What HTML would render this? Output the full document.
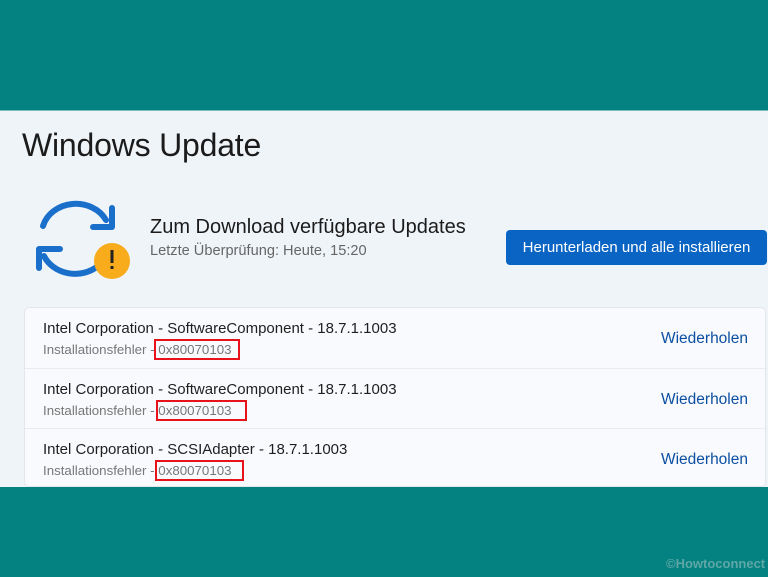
<!DOCTYPE html>
<html><head><meta charset="utf-8"><style>
*{margin:0;padding:0;box-sizing:border-box}
body{width:768px;height:577px;background:#038281;position:relative;overflow:hidden;font-family:"Liberation Sans",sans-serif;white-space:nowrap}
.panel{position:absolute;left:0;top:110px;width:768px;height:377px;background:#eff4f9;border-top:1px solid #7fb8b8}
.t{position:absolute}
h1{position:absolute;left:22px;top:127px;font-size:32px;font-weight:normal;color:#1b1b1b;letter-spacing:-0.2px}
.btn{position:absolute;left:506px;top:230px;width:261px;height:35px;background:#0a64c4;border-radius:4px;color:#fff;font-size:15px;line-height:35px;text-align:center}
.card{position:absolute;left:24px;top:307px;width:742px;height:180px;background:#f8fafd;border:1px solid #e3e7ec;border-radius:5px}
.row{position:absolute;left:0;width:742px;height:60px;border-top:1px solid #e8ebef}
.row .a{position:absolute;left:18px;top:12px;font-size:15px;color:#1f1f1f}
.row .b{position:absolute;left:18px;top:34px;font-size:13.3px;color:#777}
.row .c{position:absolute;right:19px;top:22px;font-size:15.5px;color:#0c4fa2}
.box{position:absolute;top:31px;height:21px;border:2px solid #e8121b}
</style></head><body>
<div class="panel"></div>
<h1>Windows Update</h1>
<svg class="t" style="left:0;top:0" width="768" height="300">
<g fill="none" stroke="#1a6fcb" stroke-width="6" stroke-linecap="round" stroke-linejoin="round">
<path d="M43 226 A34 30 0 0 1 106 220"/>
<path d="M112 208 L112 227 L93 227"/>
<path d="M39 268 L39 249 L60 249"/>
<path d="M44 256 A34 30 0 0 0 98 266"/>
</g>
<circle cx="112" cy="261" r="18" fill="#f8ab1b"/>
<rect x="110.5" y="250" width="3" height="13" fill="#222"/>
<rect x="110.5" y="266" width="3" height="3" fill="#222"/>
</svg>
<div class="t" style="left:150px;top:216px;font-size:20px;color:#1b1b1b">Zum Download verfügbare Updates</div>
<div class="t" style="left:150px;top:243px;font-size:14.6px;color:#666">Letzte Überprüfung: Heute, 15:20</div>
<div class="btn">Herunterladen und alle installieren</div>
<div class="card">
<div class="row" style="top:0;border-top:none"><div class="a">Intel Corporation - SoftwareComponent - 18.7.1.1003</div><div class="b">Installationsfehler - 0x80070103</div><div class="c">Wiederholen</div><div class="box" style="left:129px;width:86px"></div></div>
<div class="row" style="top:60px"><div class="a">Intel Corporation - SoftwareComponent - 18.7.1.1003</div><div class="b">Installationsfehler - 0x80070103</div><div class="c">Wiederholen</div><div class="box" style="left:131px;width:91px"></div></div>
<div class="row" style="top:120px"><div class="a">Intel Corporation - SCSIAdapter - 18.7.1.1003</div><div class="b">Installationsfehler - 0x80070103</div><div class="c">Wiederholen</div><div class="box" style="left:130px;width:89px"></div></div>
</div>
<div class="t" style="left:666px;top:556px;font-size:13px;color:#5fa7a6;font-weight:bold">©Howtoconnect</div>
</body></html>
